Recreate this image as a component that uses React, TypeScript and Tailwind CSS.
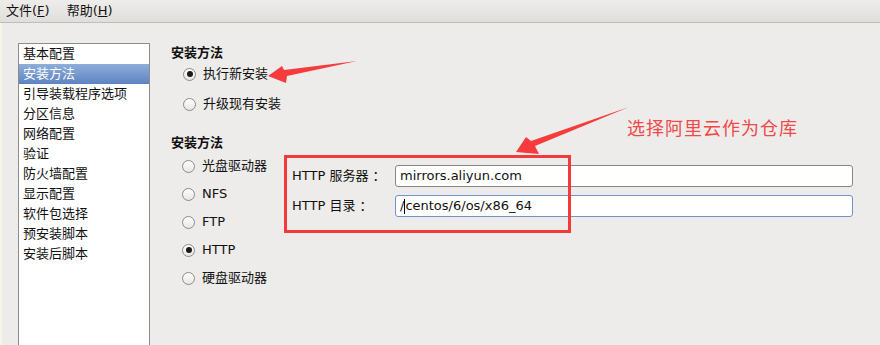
import React from "react";

const font = { fontFamily: '"DejaVu Sans", "Noto Sans CJK SC", sans-serif' };

function Radio({ checked, label }: { checked?: boolean; label: string }) {
  return (
    <div className="flex h-[20px] items-center">
      <span className="flex h-[13px] w-[13px] items-center justify-center rounded-full border border-[#8a8a8a] bg-gradient-to-b from-[#ffffff] to-[#e6e6e6]">
        {checked && <span className="h-[6px] w-[6px] rounded-full bg-[#1a1a1a]" />}
      </span>
      <span className="ml-[7px] text-[13px] leading-[20px] text-[#111]">{label}</span>
    </div>
  );
}

export default function App() {
  const items = [
    "基本配置",
    "安装方法",
    "引导装载程序选项",
    "分区信息",
    "网络配置",
    "验证",
    "防火墙配置",
    "显示配置",
    "软件包选择",
    "预安装脚本",
    "安装后脚本",
  ];
  return (
    <div className="relative h-[345px] w-[880px] overflow-hidden bg-[#edecea] text-[#111]" style={font}>
      {/* menu bar */}
      <div className="flex h-[23px] items-center gap-[17px] border-b border-[#bdbdbd] bg-gradient-to-b from-[#eeedeb] to-[#e0dedb] pl-[6px] text-[13px]">
        <span>
          文件(<span className="underline">F</span>)
        </span>
        <span>
          帮助(<span className="underline">H</span>)
        </span>
      </div>

      <div className="flex border-l-2 border-[#f7f6e4] pl-[16px] pt-[20px]">
        {/* left list */}
        <div className="h-[320px] w-[132px] border border-[#8c8c8c] bg-white">
          {items.map((it, i) => (
            <div
              key={it}
              className={
                i === 1
                  ? "h-[20px] bg-gradient-to-b from-[#8eaedb] to-[#5e84bf] pl-[4px] text-[13px] leading-[20px] text-white"
                  : "h-[20px] pl-[4px] text-[13px] leading-[20px] text-[#111]"
              }
            >
              {it}
            </div>
          ))}
        </div>

        {/* right panel */}
        <div className="ml-[21px] mt-[1px] flex flex-col">
          <div className="h-[18px] text-[13px] font-bold leading-[18px]">安装方法</div>
          <div className="ml-[12px] mt-[2px] flex flex-col gap-[10px]">
            <Radio checked label="执行新安装" />
            <Radio label="升级现有安装" />
          </div>
          <div className="mt-[20px] h-[18px] text-[13px] font-bold leading-[18px]">安装方法</div>
          <div className="mt-[4px] flex">
            <div className="ml-[11px] flex w-[110px] flex-col gap-[8px]">
              <Radio label="光盘驱动器" />
              <Radio label="NFS" />
              <Radio label="FTP" />
              <Radio checked label="HTTP" />
              <Radio label="硬盘驱动器" />
            </div>
            <div className="mt-[9px] flex flex-col gap-[8px]">
              <div className="flex h-[22px] items-center">
                <span className="w-[103px] text-[13px]">HTTP 服务器 ：</span>
                <div className="flex h-[22px] w-[458px] items-center rounded-[3px] border border-[#858585] bg-white pl-[4px] text-[13px]">
                  mirrors.aliyun.com
                </div>
              </div>
              <div className="flex h-[22px] items-center">
                <span className="w-[103px] text-[13px]">HTTP 目录 ：</span>
                <div className="flex h-[22px] w-[458px] items-center rounded-[3px] border border-[#7194c6] bg-white pl-[4px] text-[13px]">
                  <span>/</span>
                  <span className="h-[15px] w-0 border-l border-black" />
                  <span>centos/6/os/x86_64</span>
                </div>
              </div>
            </div>
          </div>
        </div>
      </div>

      {/* annotations */}
      <div className="absolute left-[284px] top-[155px] h-[78px] w-[287px] border-[3px] border-[#f23a3a]" />
      <div
        className="absolute left-[627px] top-[115px] text-[18px] leading-[24px] tracking-[1px] text-[#f04848]"
        style={{ fontFamily: '"Noto Sans CJK SC", sans-serif' }}
      >
        选择阿里云作为仓库
      </div>
      <svg className="absolute left-0 top-0" width="880" height="345" viewBox="0 0 880 345">
        <polygon points="268,76 282,66 284,70 357,61 287,76 286,83" fill="#f53b3b" />
        <polygon points="516,152 526,137 531,141 629,107 535,146 539,154" fill="#f53b3b" />
      </svg>
    </div>
  );
}
